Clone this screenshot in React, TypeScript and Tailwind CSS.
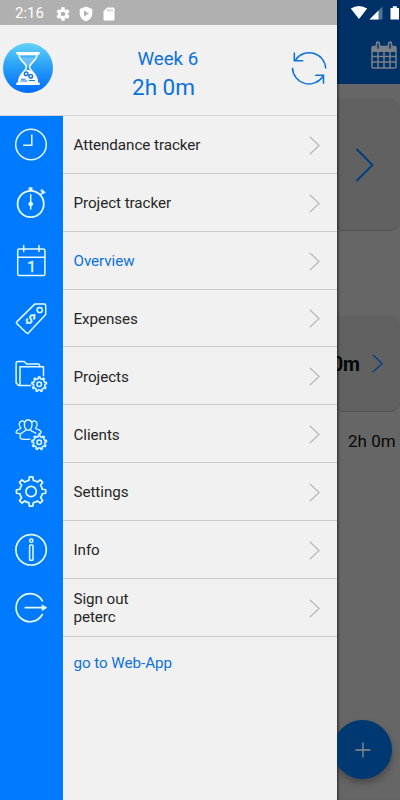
import type { ReactNode } from "react";

function gearPath(cx: number, cy: number, outer: number, root: number, teeth = 8) {
  const step = (Math.PI * 2) / teeth;
  const at = (r: number, a: number) =>
    `${(cx + r * Math.cos(a)).toFixed(2)} ${(cy + r * Math.sin(a)).toFixed(2)}`;
  let d = "";
  for (let i = 0; i < teeth; i++) {
    const a = i * step - Math.PI / 2;
    d += `${i === 0 ? "M" : "L"}${at(root, a - step * 0.25)}`;
    d += `L${at(outer, a - step * 0.15)}`;
    d += `A${outer} ${outer} 0 0 1 ${at(outer, a + step * 0.15)}`;
    d += `L${at(root, a + step * 0.25)}`;
    d += `A${root} ${root} 0 0 1 ${at(root, a + step * 0.75)}`;
  }
  return d + "Z";
}

function RailIcon({ children }: { children: ReactNode }) {
  return (
    <svg
      viewBox="0 0 36 36"
      className="size-9 shrink-0"
      fill="none"
      stroke="#e4fbff"
      strokeWidth="1.5"
      strokeLinecap="round"
      strokeLinejoin="round"
      aria-hidden="true"
    >
      {children}
    </svg>
  );
}

const clock = (
  <>
    <circle cx="18" cy="17.5" r="15.3" />
    <path d="M18.8 7.5V18.2H10.2" strokeLinecap="butt" strokeLinejoin="miter" />
  </>
);

const stopwatch = (
  <>
    <circle cx="17.7" cy="19" r="13.1" strokeWidth="1.8" />
    <path d="M16.2 2.6h3v3h-3z" fill="#e4fbff" strokeWidth="0.6" />
    <path d="M17.7 9.8V24" strokeWidth="1.5" />
    <circle cx="17.7" cy="19" r="2.1" fill="#e4fbff" strokeWidth="0.5" />
    <path d="M27.8 9.4l2-1.8" />
    <path d="M29 4.6l3.2 2.6-1.2 1.4-3.2-2.6z" fill="#e4fbff" strokeWidth="0.7" />
  </>
);

const calendar = (
  <>
    <rect x="4.7" y="6" width="27.2" height="26.6" rx="1.6" />
    <path d="M4.7 14.2h27.2M10.7 2.6v5.8M26 2.6v5.8" />
    <text
      x="18.6"
      y="29.3"
      textAnchor="middle"
      fill="#e4fbff"
      stroke="#e4fbff"
      strokeWidth="0.3"
      className="font-['Roboto',sans-serif] text-[15.5px]"
    >
      1
    </text>
  </>
);

const priceTag = (
  <>
    <path d="M22 2.9h9.4q1.3 0 1.3 1.3v9.2L15.6 31.8q-1.1 1.2-2.3 0L4 22.8q-1.2-1.1 0-2.2z" />
    <circle cx="26.7" cy="9" r="2.6" />
    <text
      x="17.6"
      y="22.7"
      textAnchor="middle"
      fill="#e4fbff"
      stroke="#e4fbff"
      strokeWidth="0.5"
      transform="rotate(42 17.6 17.8)"
      className="font-['Roboto',sans-serif] text-[13.5px]"
    >
      $
    </text>
  </>
);

const badgeGear = (
  <>
    <path d={gearPath(26.2, 25.3, 7.4, 5.7, 9)} />
    <circle cx="26.2" cy="25.3" r="2.3" />
  </>
);

const folder = (
  <>
    <path d="M17.5 26.4H5.6L3.1 24V4.4q0-2 2-2h5.4q1 0 1.6.8l1.4 1.7h11.6q1.6 0 1.6 1.5v1.2" />
    <path d="M7 25.8V7.8h23.5v9" />
    {badgeGear}
  </>
);

const people = (
  <>
    <g strokeWidth="1.3">
      <path d="M15.2 3c2.4 0 3.8 1.7 3.8 4.7s-1.7 5.6-3.8 5.6-3.8-2.6-3.8-5.6S12.8 3 15.2 3z" />
      <path d="M11 4.8C9.8 3.3 6.7 3.7 6.3 6.6c-.3 2.2.6 3.6 1.6 4.4 0 1.3-4.1.7-4.9 4.2-.2 1 .8 1.3 3.4 1.3" />
      <path d="M19.4 4.8c1.2-1.5 4.3-1.1 4.7 1.8.3 2.2-.6 3.6-1.6 4.4 0 1.3 4.6.8 5.6 3.8.3 1.1-.4 1.7-2 1.7" />
      <path d="M12.6 12.7c.2 2.8-5 1.6-5.5 5.8-.1 1.8-.1 3 1 3.3 3.2.8 6 .8 8.900.4" />
      <path d="M17.8 12.7c0 2.3 3.4 1.9 5 3.5" />
    </g>
    {badgeGear}
  </>
);

const gear = (
  <>
    <path d={gearPath(18.1, 17.5, 14.7, 11.4)} strokeWidth="1.7" />
    <circle cx="18.1" cy="17.5" r="5.2" strokeWidth="1.7" />
  </>
);

const info = (
  <>
    <circle cx="18.1" cy="17.8" r="15.2" strokeWidth="1.7" />
    <circle cx="18.3" cy="8.7" r="1.6" />
    <rect x="16.6" y="12.9" width="3.4" height="15.3" rx="0.8" />
  </>
);

const signOut = (
  <>
    <path d="M29.3 10.9A14 14 0 1 0 29.3 24.5" strokeWidth="1.7" />
    <path d="M12.3 17.7H30" strokeWidth="1.7" />
    <path d="M29.5 15.2l4.2 2.5-4.2 2.5z" fill="#e4fbff" strokeWidth="1" />
  </>
);

const menu: { label: string; detail?: string; icon: ReactNode; active?: boolean }[] = [
  { label: "Attendance tracker", icon: clock },
  { label: "Project tracker", icon: stopwatch },
  { label: "Overview", icon: calendar, active: true },
  { label: "Expenses", icon: priceTag },
  { label: "Projects", icon: folder },
  { label: "Clients", icon: people },
  { label: "Settings", icon: gear },
  { label: "Info", icon: info },
  { label: "Sign out", detail: "peterc", icon: signOut },
];

function StatusIcons() {
  return (
    <div className="flex items-center pl-[10.5px] text-white">
      <svg viewBox="0 0 24 24" className="size-4" fill="currentColor">
        <path d="M19.43 12.98c.04-.32.07-.64.07-.98s-.03-.66-.07-.98l2.11-1.65c.19-.15.24-.42.12-.64l-2-3.46c-.12-.22-.39-.3-.61-.22l-2.49 1c-.52-.4-1.08-.73-1.69-.98l-.38-2.65C14.46 2.18 14.25 2 14 2h-4c-.25 0-.46.18-.49.42l-.38 2.65c-.61.25-1.17.59-1.69.98l-2.49-1c-.23-.09-.49 0-.61.22l-2 3.46c-.13.22-.07.49.12.64l2.11 1.65c-.04.32-.07.65-.07.98s.03.66.07.98l-2.11 1.65c-.19.15-.24.42-.12.64l2 3.46c.12.22.39.3.61.22l2.49-1c.52.4 1.08.73 1.69.98l.38 2.65c.03.24.24.42.49.42h4c.25 0 .46-.18.49-.42l.38-2.65c.61-.25 1.17-.59 1.69-.98l2.49 1c.23.09.49 0 .61-.22l2-3.46c.12-.22.07-.49-.12-.64l-2.11-1.65zM12 15.5a3.5 3.5 0 1 1 0-7 3.5 3.5 0 0 1 0 7z" />
      </svg>
      <svg viewBox="0 0 14 16" className="ml-2 h-4 w-3.5" fill="currentColor">
        <path
          fillRule="evenodd"
          d="M7 .6l6.3 2.4v4.6c0 3.6-2.6 6.6-6.3 7.8C3.3 14.2.7 11.2.7 7.6V3zM5 4.600v6l4.9-3z"
        />
      </svg>
      <svg viewBox="0 0 12 14" className="ml-[10.5px] h-3.5 w-3" fill="currentColor">
        <path
          fillRule="evenodd"
          d="M4.3.5h6.2q1 0 1 1v11q0 1-1 1h-9q-1 0-1-1V4.3zM4.4 2.2v2.2h1V2.2zM6.5 2.2v2.2h1V2.2zM8.6 2.2v2.2h1V2.2z"
        />
      </svg>
    </div>
  );
}

function HourglassLogo() {
  return (
    <svg viewBox="0 0 50 50" className="size-[50px]">
      <defs>
        <linearGradient id="logo" x1="0" y1="0" x2="0" y2="1">
          <stop offset="0" stopColor="#64d2f6" />
          <stop offset="0.5" stopColor="#259cf7" />
          <stop offset="1" stopColor="#006bff" />
        </linearGradient>
      </defs>
      <circle cx="25" cy="25" r="25" fill="url(#logo)" />
      <g fill="#fff">
        <rect x="13.3" y="9" width="23.4" height="2.5" rx="0.5" />
        <path
          d="M16 11.5c0 6.5 7.5 8.5 7.5 12.5s-7.5 6-7.5 16h18c0-10-7.5-12-7.5-16S34 18 34 11.5z"
          fill="none"
          stroke="#fff"
          strokeWidth="1.5"
        />
        <path d="M17 14.5h16c-1 3.5-4 5-6.3 8h-3.4C21 19.5 18 18 17 14.5z" opacity="0.25" />
        <path d="M15 39.5c0-7 4-11 10-12.8 6 1.8 10 5.8 10 12.8z" />
        <rect x="13.3" y="39.5" width="23.4" height="2.5" rx="0.5" />
      </g>
      <g fill="none" stroke="#1976db" strokeWidth="1.5">
        <circle cx="23.2" cy="30.8" r="1.8" />
        <circle cx="27.8" cy="33.2" r="1.8" />
        <path d="M18 36.2h4.5M17.5 38h7M26 37.5h6" strokeWidth="1" />
      </g>
    </svg>
  );
}

function Chevron({ className }: { className: string }) {
  return (
    <svg
      viewBox="0 0 11 19"
      className={`h-[19px] w-[11px] shrink-0 ${className}`}
      fill="none"
      stroke="currentColor"
      strokeWidth="1.3"
    >
      <path d="M.7.7l9.4 8.8-9.4 8.8" />
    </svg>
  );
}

function Drawer() {
  return (
    <aside className="flex h-full w-[337px] shrink-0 flex-col bg-[#f1f1f1]">
      <div className="flex h-[25px] shrink-0 items-center bg-[#b0b0b0] pl-[15px] pt-0.5">
        <span className="w-[29px] text-[15px] leading-none text-white">2:16</span>
        <StatusIcons />
      </div>

      <header className="flex h-[91px] shrink-0 border-b border-[#d2d2d2] text-[#0b72dc]">
        <div className="w-[53px] pl-[2.5px] pt-[18px]">
          <HourglassLogo />
        </div>
        <div className="flex-1 pt-[22px]">
          <p className="pl-[84.5px] text-[18.7px] leading-6">Week 6</p>
          <p className="pl-[79px] pt-[2px] text-[22.5px] leading-7">2h 0m</p>
        </div>
        <svg
          viewBox="0 0 36 36"
          className="mr-[10px] mt-[25px] size-9"
          fill="none"
          stroke="currentColor"
          strokeWidth="1.5"
        >
          <path d="M4.3 10.3A16.5 16.5 0 0 1 34.7 18.5M1.5 17.7A16.5 16.5 0 0 0 32.2 25.8" />
          <path d="M3.3 2.5v8.2h8.9M24.2 25.3h8.3v8.5" />
        </svg>
      </header>

      <div className="flex flex-1">
        <div className="flex w-[63px] flex-col bg-[#007bff] pl-[13px]">
          {menu.map((item) => (
            <div key={item.label} className="flex h-[57.85px] items-center pt-px">
              <RailIcon>{item.icon}</RailIcon>
            </div>
          ))}
        </div>
        <nav className="flex-1">
          {menu.map((item) => (
            <a
              key={item.label}
              className={`flex h-[57.85px] items-center justify-between border-b border-[#cbcbcb] pl-[10.5px] pr-[17px] pt-[1.8px] text-[15.2px] leading-[18px] tracking-[-0.06px] ${
                item.active ? "text-[#0b72dc]" : "text-[#262626]"
              }`}
            >
              <span>
                {item.label}
                {item.detail && <span className="block">{item.detail}</span>}
              </span>
              <Chevron className="text-[#b9b9b9]" />
            </a>
          ))}
          <a className="block pl-[10.5px] pt-[17.4px] text-[15.2px] leading-[18px] tracking-[-0.06px] text-[#0b72dc]">
            go to Web-App
          </a>
        </nav>
      </div>
    </aside>
  );
}

function DimmedPage() {
  return (
    <main className="flex h-full w-[63px] flex-col overflow-hidden bg-[#666] shadow-[inset_3px_0_3px_-2px_rgba(0,0,0,0.6)]">
      <div className="h-[84px] shrink-0 bg-[#003166] shadow-[inset_3px_0_3px_-2px_rgba(0,0,0,0.6)]">
        <div className="flex h-[25px] items-center pl-[13px] pt-px">
          <svg viewBox="0 0 50 16" className="h-4 w-[50px] shrink-0" fill="#fff">
            <path d="M.8 3.6Q9-1.4 17.2 3.6L9 14z" />
            <path d="M32.5 1.5V14.5H19.5z" fill="#4f7398" />
            <path d="M28.5 5.5v9h-9z" />
            <path d="M40.500 3h2.3V1.200h4V3h2.2v11.5h-8.5z" />
          </svg>
        </div>
        <svg
          viewBox="0 0 28 28"
          className="ml-[33px] mt-[15.5px] size-7"
          fill="none"
          stroke="#7b8087"
          strokeWidth="1.5"
        >
          <rect x="2" y="5.5" width="24" height="21.5" rx="1.5" />
          <path d="M2 8.5h24" strokeWidth="5" />
          <path d="M2 15.5h24M2 21h24M8 10v17M14 10v17M20 10v17" />
          <path d="M8 2.5v5M20 2.5v5" strokeWidth="4.5" strokeLinecap="round" />
          <path d="M8 3v4M20 3v4" stroke="#003166" strokeLinecap="round" />
        </svg>
      </div>

      <section className="mt-[15px] flex h-[132px] shrink-0 items-center rounded-r-[10px] border-b border-[#535353] bg-[#606060]/90 pl-[18px] shadow-[inset_3px_0_3px_-2px_rgba(0,0,0,0.6)]">
        <svg
          viewBox="0 0 20 34"
          className="h-[34px] w-5 shrink-0"
          fill="none"
          stroke="#003f86"
          strokeWidth="2"
        >
          <path d="M1.5 1l16 16-16 16" />
        </svg>
      </section>

      <section className="mt-[85px] flex h-[96px] shrink-0 items-center rounded-r-[10px] border-b border-[#535353] bg-[#606060]/90 shadow-[inset_3px_0_3px_-2px_rgba(0,0,0,0.6)]">
        <span className="flex w-[23px] shrink-0 justify-end whitespace-nowrap pt-0.5 text-[19.5px] font-bold text-[#050505]">
          2h 0m
        </span>
        <Chevron className="ml-3 text-[#003f86]" />
      </section>

      <p className="whitespace-nowrap pl-[11px] pt-[18px] text-[17px] leading-[22px] text-[#080808]">
        2h 0m
      </p>

      <button className="-ml-[4px] mb-[21px] mt-auto flex size-[59px] shrink-0 items-center justify-center rounded-full bg-[#003871] shadow-[0_4px_7px_rgba(0,0,0,0.3)]">
        <svg
          viewBox="0 0 16 16"
          className="size-4"
          stroke="#8b8d8f"
          strokeWidth="1.3"
          aria-label="Add"
        >
          <path d="M8 .5v15M.5 8h15" />
        </svg>
      </button>
    </main>
  );
}

export default function App() {
  return (
    <div className="flex h-[800px] w-[400px] overflow-hidden bg-[#666] font-['Roboto',sans-serif]">
      <Drawer />
      <DimmedPage />
    </div>
  );
}
